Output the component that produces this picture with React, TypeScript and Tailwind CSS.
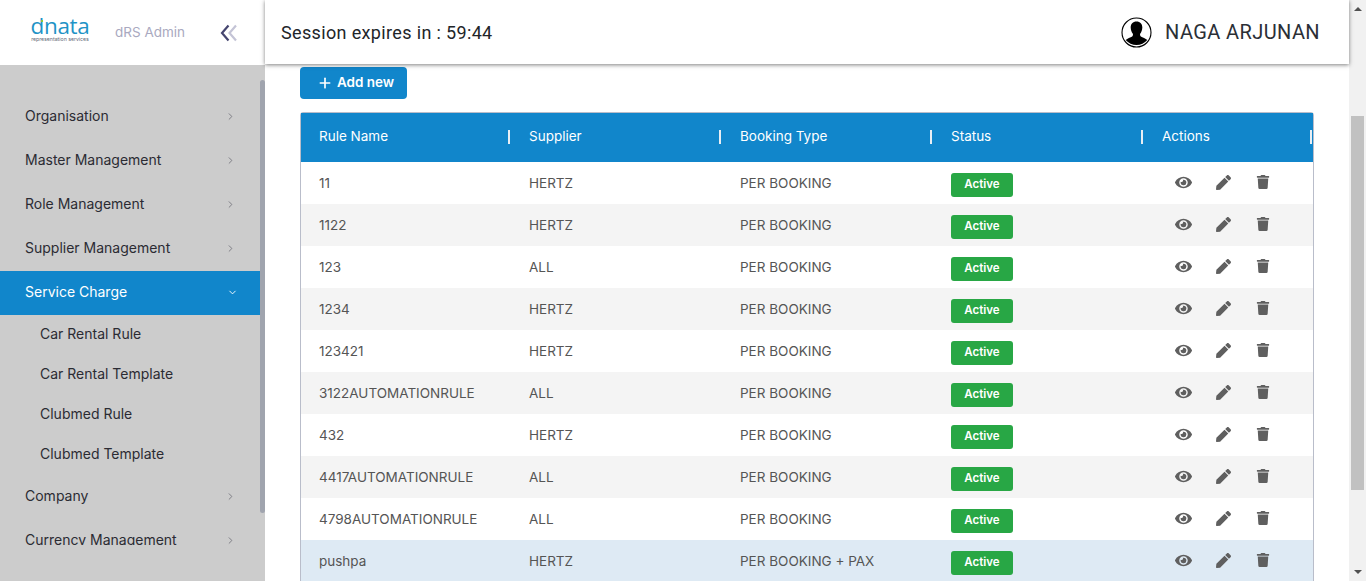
import { FaEye, FaPen, FaTrash } from "react-icons/fa"
import { FiChevronDown, FiChevronRight, FiPlus } from "react-icons/fi"

const menu = ["Organisation", "Master Management", "Role Management", "Supplier Management"]
const subMenu = ["Car Rental Rule", "Car Rental Template", "Clubmed Rule", "Clubmed Template"]

const rows = [
    ["11", "HERTZ", "PER BOOKING"],
    ["1122", "HERTZ", "PER BOOKING"],
    ["123", "ALL", "PER BOOKING"],
    ["1234", "HERTZ", "PER BOOKING"],
    ["123421", "HERTZ", "PER BOOKING"],
    ["3122AUTOMATIONRULE", "ALL", "PER BOOKING"],
    ["432", "HERTZ", "PER BOOKING"],
    ["4417AUTOMATIONRULE", "ALL", "PER BOOKING"],
    ["4798AUTOMATIONRULE", "ALL", "PER BOOKING"],
    ["pushpa", "HERTZ", "PER BOOKING + PAX"],
]

const columns = ["Rule Name", "Supplier", "Booking Type", "Status", "Actions"]
const gridCols = "grid grid-cols-[210px_211px_211px_211px_169px]"

const MenuItem = ({ label }: { label: string }) => (
    <div className="h-11 pb-1 flex items-center justify-between pl-[25px] pr-[24px] text-[14px] text-[#2b2b33]">
        <span>{label}</span>
        <FiChevronRight className="text-[#77777f] mt-[2px]" size={11} />
    </div>
)

const Sidebar = () => (
    <aside className="w-[265px] h-full shrink-0 flex flex-col">
        <div className="h-[65px] shrink-0 bg-white flex items-center pl-[31px]">
            <div className="w-[58px] flex flex-col items-center gap-px mt-[-8px]">
                <span className="relative text-[22.5px] font-medium leading-[19px] tracking-[-0.3px] text-[#1f93c6] font-['Open_Sans']">
                    dnata
                    <span className="absolute left-[11px] top-[4px] w-[2px] h-[2px] bg-[#8cc63f]" />
                </span>
                <span className="text-[5.2px] leading-[6px] whitespace-nowrap text-[#5f6875]">representation services</span>
            </div>
            <span className="ml-[26px] text-[13.5px] text-[#a9a9c0]">dRS Admin</span>
            <svg className="ml-[35px]" width="18" height="18" viewBox="0 0 18 18" fill="none" strokeWidth="2.2">
                <path d="M8.500 1.500 2 9 8.500 16.500" stroke="#45456f" />
                <path d="M16 1.500 9.500 9 16 16.500" stroke="#c4c4d6" />
            </svg>
        </div>
        <div className="flex-1 bg-[#cccccc] flex overflow-hidden items-start">
            <nav className="w-[260px] h-[480px] overflow-hidden pt-[30px] shrink-0">
                {menu.map((m) => <MenuItem key={m} label={m} />)}
                <div className="h-11 pb-1 flex items-center justify-between pl-[25px] pr-[22px] bg-[#1186cb] text-white text-[14px]">
                    <span>Service Charge</span>
                    <FiChevronDown className="mt-[2px]" size={11} />
                </div>
                {subMenu.map((s) => (
                    <div key={s} className="h-10 pb-1 flex items-center pl-10 text-[14px] text-[#2b2b33]">{s}</div>
                ))}
                <MenuItem label="Company" />
                <MenuItem label="Currency Management" />
            </nav>
            <div className="w-[5px] h-full pt-[15px] pb-[68px]">
                <div className="h-full bg-[#a0a4ae] rounded-[3px]" />
            </div>
        </div>
    </aside>
)

const Header = () => (
    <header className="h-[64px] shrink-0 bg-white shadow-[0_1px_4px_rgba(0,0,0,0.5)] z-10 flex items-center justify-between pl-4 pr-[29px] font-['Roboto']">
        <span className="text-[18px] font-[450] tracking-[0.35px] text-[#212529]">Session expires in : 59:44</span>
        <div className="flex items-center">
            <svg width="31" height="31" viewBox="0 0 31 31">
                <circle cx="15.500" cy="15.500" r="14.500" fill="white" stroke="black" strokeWidth="1.100" />
                <path d="M15.500 4.500c-3.900 0-6 2.800-5.800 6.300.1 2.300 1 4.400 2 5.800.5 1.100.4 2.200-.5 2.800-1.700 1.100-4.900 1.800-6.500 3.700a14.500 14.500 0 0 0 21.600 0c-1.600-1.900-4.800-2.600-6.500-3.700-.9-.6-1-1.700-.5-2.800 1-1.400 1.900-3.500 2-5.800.2-3.500-1.900-6.300-5.800-6.300Z" fill="black" />
            </svg>
            <span className="ml-[13px] text-[20px] font-[450] tracking-[0.4px] text-[#2b2f36]">NAGA ARJUNAN</span>
        </div>
    </header>
)

const RuleRow = ({ row, index }: { row: string[]; index: number }) => {
    const bg = index === 9 ? "bg-[#deeaf4]" : index % 2 === 1 ? "bg-[#f4f4f4]" : "bg-white"
    return (
        <div className={`${gridCols} h-[42px] items-center text-[13.5px] text-[#555555] ${bg}`}>
            <span className="pl-[18px]">{row[0]}</span>
            <span className="pl-[18px]">{row[1]}</span>
            <span className="pl-[18px]">{row[2]}</span>
            <span className="pl-[18px] pt-1">
                <span className="w-[62px] h-6 rounded-[3px] bg-[#28a745] text-white text-[11.5px] font-semibold flex items-center justify-center">Active</span>
            </span>
            <span className="pl-[29px] pb-[2px] flex items-center gap-5 text-[#5f5f5f]">
                <span className="w-5 flex justify-center"><FaEye size={17} /></span>
                <span className="w-5 flex justify-center"><FaPen size={15} /></span>
                <span className="w-5 flex justify-center"><FaTrash size={14} /></span>
            </span>
        </div>
    )
}

const App = () => {
    return (
        <div className="h-[581px] w-[1366px] flex overflow-hidden bg-white font-['Inter',sans-serif]">
            <Sidebar />
            <div className="flex-1 flex flex-col min-w-0">
                <Header />
                <main className="pl-[35px] pt-[3px]">
                    <button className="w-[107px] h-8 pl-1 pb-[2px] bg-[#1186cb] rounded-[4px] text-white text-[13.5px] font-semibold flex items-center justify-center gap-1">
                        <FiPlus className="mt-[2px]" size={16} strokeWidth={2.5} />
                        Add new
                    </button>
                    <div className="mt-[13px] w-[1014px] border border-[#b9bdca] rounded-t-[3px]">
                        <div className={`${gridCols} h-[49px] pb-[2px] items-center bg-[#1186cb] text-white text-[13.5px]`}>
                            {columns.map((c) => (
                                <div key={c} className="flex items-center justify-between pl-[18px] pr-px">
                                    <span>{c}</span>
                                    <span className="w-[2px] h-[14px] bg-[#e8eef4]" />
                                </div>
                            ))}
                        </div>
                        {rows.map((r, i) => <RuleRow key={r[0]} row={r} index={i} />)}
                    </div>
                </main>
            </div>
            <div className="w-[17px] shrink-0 bg-[#f1f1f1] flex flex-col items-center py-[7px]">
                <span className="w-0 h-0 border-x-[4px] border-x-transparent border-b-[4px] border-b-[#505050]" />
                <div className="mt-[105px] w-[13px] h-[374px] bg-[#c1c1c1]" />
                <span className="mt-auto w-0 h-0 border-x-[4px] border-x-transparent border-t-[4px] border-t-[#505050]" />
            </div>
        </div>
    )
}

export default App
